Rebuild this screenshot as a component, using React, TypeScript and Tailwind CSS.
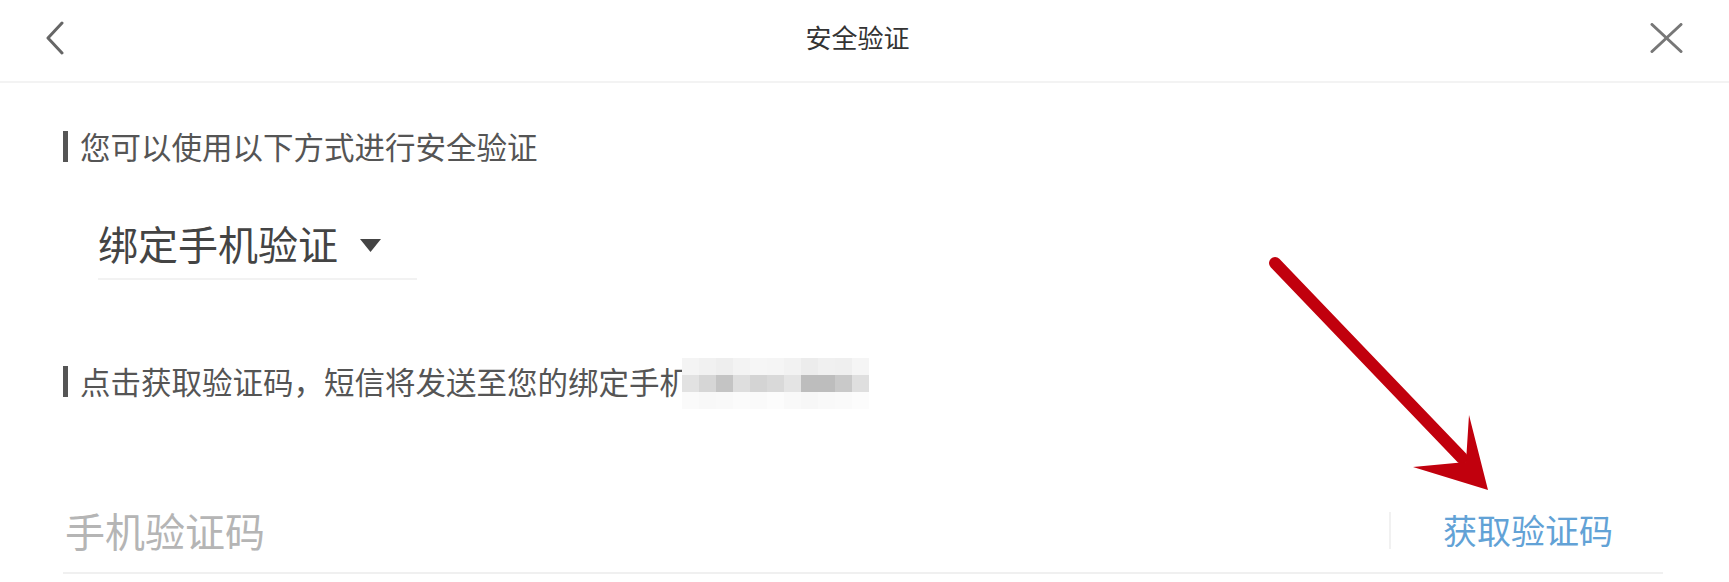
// App.tsx
const cjk = "font-['Noto_Sans_CJK_SC','Noto_Sans',sans-serif]";

// mosaic cells for the masked phone number (3 rows x 11 cols)
const mosaic = [
  ["bg-[#f4f4f4]", "bg-[#f1f1f1]", "bg-[#eeeeee]", "bg-[#f3f3f3]", "bg-[#f6f6f6]", "bg-[#f5f5f5]", "bg-[#f2f2f2]", "bg-[#ececec]", "bg-[#f0f0f0]", "bg-[#efefef]", "bg-[#f5f5f5]"],
  ["bg-[#e2e2e2]", "bg-[#d6d6d6]", "bg-[#c4c4c4]", "bg-[#dedede]", "bg-[#d4d4d4]", "bg-[#d9d9d9]", "bg-[#e4e4e4]", "bg-[#bdbdbd]", "bg-[#bdbdbd]", "bg-[#c9c9c9]", "bg-[#dfdfdf]"],
  ["bg-[#fafafa]", "bg-[#f8f8f8]", "bg-[#f9f9f9]", "bg-[#fbfbfb]", "bg-[#fafafa]", "bg-[#fcfcfc]", "bg-[#f9f9f9]", "bg-[#f7f7f7]", "bg-[#f9f9f9]", "bg-[#fafafa]", "bg-[#fcfcfc]"],
];

function SectionLabel({ children }: { children: React.ReactNode }) {
  return (
    <div className="flex h-[32px] items-center">
      <span className="h-[31px] w-[5px] bg-[#555555]" />
      <span className={`ml-[12px] text-[30.5px] leading-[32px] text-[#555555] ${cjk}`}>{children}</span>
    </div>
  );
}

export default function App() {
  return (
    <div className="relative h-[582px] w-[1729px] overflow-hidden bg-white">
      {/* Header */}
      <div className="flex h-[83px] items-center justify-between border-b-2 border-[#f3f3f3] pl-[45px] pr-[46px]">
        <svg width="20" height="34" viewBox="0 0 20 34" className="mt-[-6px]">
          <polyline points="17,2 3,17 17,32" fill="none" stroke="#666666" strokeWidth="3" strokeLinecap="round" strokeLinejoin="round" />
        </svg>
        <span className={`mt-[-8px] text-[26px] leading-[30px] text-[#333333] ${cjk}`}>安全验证</span>
        <svg width="33" height="30" viewBox="0 0 33 30" className="mt-[-6px]">
          <line x1="2" y1="1.5" x2="31" y2="28.5" stroke="#777777" strokeWidth="3" strokeLinecap="round" />
          <line x1="31" y1="1.5" x2="2" y2="28.5" stroke="#777777" strokeWidth="3" strokeLinecap="round" />
        </svg>
      </div>

      <div className="flex flex-col pl-[63px] pr-[66px]">
        <div className="mt-[47px]">
          <SectionLabel>您可以使用以下方式进行安全验证</SectionLabel>
        </div>

        {/* method dropdown */}
        <div className="ml-[35px] mt-[61px] flex w-[319px] items-center border-b-2 border-[#f2f2f2] pb-[15px]">
          <span className={`text-[40px] leading-[40px] text-[#444444] ${cjk}`}>绑定手机验证</span>
          <svg width="21" height="13" viewBox="0 0 21 13" className="ml-[22px] mt-[4px]">
            <polygon points="0,0 21,0 10.5,13" fill="#444444" />
          </svg>
        </div>

        <div className="mt-[85px] flex h-[32px] items-start">
          <SectionLabel>点击获取验证码，短信将发送至您的绑定手机</SectionLabel>
          <div className="ml-[-8px] mt-[-7px] flex flex-col">
            {mosaic.map((row, r) => (
              <div key={r} className="flex">
                {row.map((c, i) => (
                  <span key={i} className={`h-[17px] w-[17px] ${c}`} />
                ))}
              </div>
            ))}
          </div>
        </div>

        {/* code input row */}
        <div className="mt-[112px] box-content flex h-[42px] items-center border-b-2 border-[#f0f0f0] pb-[21px]">
          <span className={`ml-[2px] flex-1 text-[40px] leading-[42px] text-[#b5b5b5] ${cjk}`}>手机验证码</span>
          <span className="h-[37px] w-[2px] bg-[#f1f1f1]" />
          <span className={`ml-[52px] mr-[50px] text-[34px] leading-[40px] text-[#62a2d6] ${cjk}`}>获取验证码</span>
        </div>
      </div>

      {/* annotation arrow */}
      <svg className="pointer-events-none absolute left-0 top-0" width="1729" height="582" viewBox="0 0 1729 582">
        <line x1="1275" y1="263" x2="1462" y2="458" stroke="#c1000d" strokeWidth="12" strokeLinecap="round" />
        <polygon points="1488,490 1413,467 1466,462 1469,415" fill="#c1000d" />
      </svg>
    </div>
  );
}
